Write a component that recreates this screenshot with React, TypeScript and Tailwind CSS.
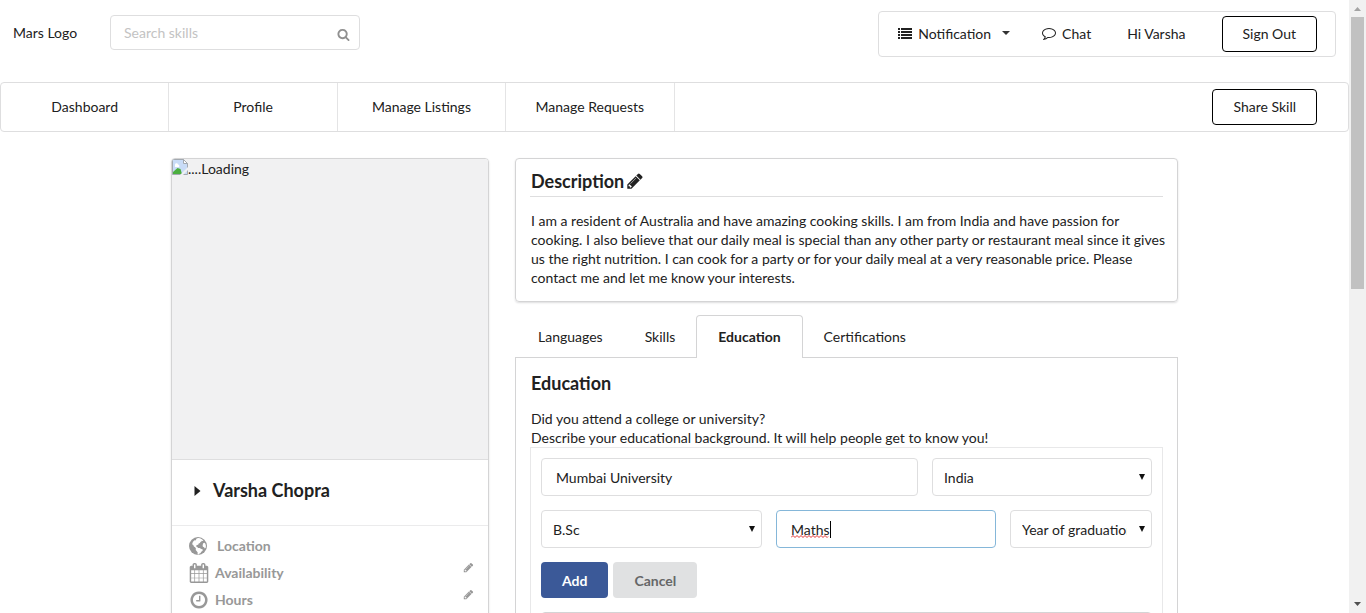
import type { ReactNode } from "react";

const paths = {
  search:
    "M1216 832q0-185-131.5-316.5t-316.5-131.5-316.5 131.5-131.5 316.5 131.5 316.5 316.5 131.5 316.5-131.5 131.5-316.5zm512 832q0 52-38 90t-90 38q-54 0-90-38l-343-342q-179 124-399 124-143 0-273.5-55.5t-225-150-150-225-55.5-273.5 55.5-273.5 150-225 225-150 273.5-55.5 273.5 55.5 225 150 150 225 55.5 273.5q0 220-124 399l343 343q37 37 37 90z",
  list: "M0 256h256v256h-256zM384 256h1408v256h-1408zM0 640h256v256h-256zM384 640h1408v256h-1408zM0 1024h256v256h-256zM384 1024h1408v256h-1408zM0 1408h256v256h-256zM384 1408h1408v256h-1408z",
  comment:
    "M896 384q-204 0-381.5 69.5t-282 187.5-104.5 255q0 112 71.5 213.5t201.5 175.5l87 50-27 96q-24 91-70 172 152-63 275-171l43-38 57 6q69 8 130 8 204 0 381.5-69.5t282-187.5 104.5-255-104.5-255-282-187.5-381.5-69.5zm896 512q0 174-120 321.5t-326 233-450 85.5q-70 0-145-8-198 175-460 242-49 14-114 22h-5q-15 0-27-10.5t-16-27.5v-1q-3-4-.5-12t2-10 4.5-9.5l6-9 7-8.5 8-9q7-8 31-34.5t34.5-38 31-39.5 32.5-51 27-59 26-76q-157-89-247.5-220t-90.5-281q0-174 120-321.5t326-233 450-85.5 450 85.5 326 233 120 321.5z",
  pencil:
    "M491 1536l91-91-235-235-91 91v107h128v128h107zm523-928q0-22-22-22-10 0-17 7l-542 542q-7 7-7 17 0 22 22 22 10 0 17-7l542-542q7-7 7-17zm-54-192l416 416-832 832h-416v-416zm683 96q0 53-37 90l-166 166-416-416 166-165q36-38 90-38 53 0 91 38l235 234q37 39 37 91z",
  clock:
    "M1024 544v448q0 14-9 23t-23 9h-320q-14 0-23-9t-9-23v-64q0-14 9-23t23-9h224v-352q0-14 9-23t23-9h64q14 0 23 9t9 23zm416 352q0-148-73-273t-198-198-273-73-273 73-198 198-73 273 73 273 198 198 273 73 273-73 198-198 73-273zm224 0q0 209-103 385.5t-279.5 279.5-385.5 103-385.5-103-279.5-279.5-103-385.5 103-385.5 279.5-279.5 385.5-103 385.5 103 279.5 279.5 103 385.5z",
  calendar:
    "M192 1664h288v-288h-288v288zm352 0h320v-288h-320v288zm-352-352h288v-320h-288v320zm352 0h320v-320h-320v320zm-352-384h288v-288h-288v288zm736 736h320v-288h-320v288zm-384-736h320v-288h-320v288zm768 736h288v-288h-288v288zm-384-352h320v-320h-320v320zm-352-864v-288q0-13-9.5-22.5t-22.5-9.5h-64q-13 0-22.5 9.5t-9.5 22.5v288q0 13 9.5 22.5t22.5 9.5h64q13 0 22.5-9.5t9.5-22.5zm736 864h288v-320h-288v320zm-384-384h320v-288h-320v288zm384 0h288v-288h-288v288zm32-480v-288q0-13-9.5-22.5t-22.5-9.5h-64q-13 0-22.5 9.5t-9.5 22.5v288q0 13 9.5 22.5t22.5 9.5h64q13 0 22.5-9.5t9.5-22.5zm384-64v1280q0 52-38 90t-90 38h-1408q-52 0-90-38t-38-90v-1280q0-52 38-90t90-38h128v-96q0-66 47-113t113-47h64q66 0 113 47t47 113v96h384v-96q0-66 47-113t113-47h64q66 0 113 47t47 113v96h128q52 0 90 38t38 90z",
};

function Icon({ name, className }: { name: keyof typeof paths; className: string }) {
  return (
    <svg viewBox="0 0 1792 1792" fill="currentColor" aria-hidden="true" className={`shrink-0 ${className}`}>
      <path d={paths[name]} />
    </svg>
  );
}

function GlobeIcon({ className }: { className: string }) {
  return (
    <svg viewBox="0 0 18 18" aria-hidden="true" className={`shrink-0 ${className}`}>
      <circle cx="9" cy="9" r="9" fill="currentColor" />
      <path
        fill="#fff"
        d="M7.600 1.600 9.200 1l1.800.3 1.900.9 1.500 1.300-.8.5-.9-.3-.3.9-1 .4-.4 1-1.300.6-.5 1.100-1.400.4-.7.9.4.8.9.2.6.9 1.600.2 1.700.9 1.500.5-.2 1.300-1.300.9-.7 1.300-1.400.8-.8 1-.9-.4.2-1.900-.9-1.300-1.100-1.200.2-1.500-.8-1.200-1.200-.8-.6-1.400-1-.7.1-1.400 1-1.700 1.100-1 .9.3.6-.9z"
      />
      <path fill="#fff" d="m14.200 6.200 1.300-.5.900 1.100.5 1.900-.2 2-.9.900-.7-1.300-1.200-.6-.3-1.500z" />
    </svg>
  );
}

function BrokenImageIcon() {
  return (
    <svg viewBox="0 0 16 16" className="size-4 shrink-0" aria-hidden="true">
      <path d="M.5.5h11l4 4v11H.5z" fill="#c9dcf7" stroke="#a3a9b0" />
      <path d="M1 15v-2l4.500-4 3 1 1.500 5z" fill="#4caf3f" />
      <path d="M3 6a1.500 1.500 0 0 1 3-.5A1.500 1.500 0 0 1 7 8H3z" fill="#fff" />
      <path d="M11.500.5v4h4z" fill="#fff" stroke="#a3a9b0" />
      <path d="M16 8v3l-5 5H8z" fill="#f1f1f2" />
    </svg>
  );
}

function Select({ label, value }: { label: string; value: string }) {
  return (
    <div className="relative min-w-0">
      <select
        aria-label={label}
        className="h-[38px] w-full appearance-none overflow-hidden rounded border border-[#dededf] bg-white pr-6 pl-[11px] text-clip"
      >
        <option>{value}</option>
      </select>
      <svg viewBox="0 0 6 6" aria-hidden="true" className="pointer-events-none absolute top-4 right-[7px] size-[6px]">
        <path d="M0 0h6L3 6z" fill="#111" />
      </svg>
    </div>
  );
}

function NavItem({ children }: { children: ReactNode }) {
  return (
    <a href="#" className="flex w-1/8 items-center justify-center border-r border-[#e4e4e5] pb-[2px]">
      {children}
    </a>
  );
}

function OutlineButton({ children }: { children: ReactNode }) {
  return (
    <button type="button" className="h-9 rounded border border-black bg-white px-5 pb-[2px]">
      {children}
    </button>
  );
}

function Detail({ icon, label, editable }: { icon: ReactNode; label: string; editable?: boolean }) {
  return (
    <li className="flex h-[27px] items-center text-[#989898]">
      {icon}
      <span className="flex-1 font-bold">{label}</span>
      {editable && (
        <button type="button" aria-label={`Edit ${label}`} className="pb-[10px]">
          <Icon name="pencil" className="size-[11px]" />
        </button>
      )}
    </li>
  );
}

function Tab({ children }: { children: ReactNode }) {
  return (
    <button type="button" role="tab" aria-selected="false" className="px-[21px]">
      {children}
    </button>
  );
}

function Scrollbar() {
  return (
    <div aria-hidden="true" className="flex w-[17px] shrink-0 flex-col bg-[#f1f1f1]">
      <svg viewBox="0 0 17 17" className="size-[17px]">
        <path d="M5 11h7L8.500 7z" fill="#a3a3a3" />
      </svg>
      <div className="mx-[2px] flex flex-1 flex-col">
        <div className="h-[47%] bg-[#c1c1c1]" />
      </div>
      <svg viewBox="0 0 17 17" className="size-[17px]">
        <path d="M5 6h7l-3.500 4z" fill="#505050" />
      </svg>
    </div>
  );
}

export default function App() {
  return (
    <div className="flex h-screen overflow-hidden bg-white font-['Lato',sans-serif] text-[14px] leading-[19px] text-[#212121]">
      <div className="min-w-0 flex-1 overflow-hidden">
        <header className="flex items-start justify-between px-[13px] pt-[11px]">
          <div className="flex items-center pt-1">
            <span className="w-[97px]">Mars Logo</span>
            <div className="relative w-[250px]">
              <input
                type="text"
                aria-label="Search skills"
                placeholder="Search skills"
                className="block h-[35px] w-full rounded border border-[#dededf] pr-8 pb-px pl-[13px] placeholder:text-[#c3c3c3]"
              />
              <Icon name="search" className="absolute top-[13px] right-[10px] size-[13px] text-[#909090]" />
            </div>
          </div>
          <nav className="flex h-[46px] items-center rounded border border-[#dededf] pr-[18px] pl-[19px]">
            <button type="button" className="flex items-center pb-[2px]">
              <Icon name="list" className="mr-[6px] size-[14px]" />
              Notification
              <svg viewBox="0 0 8 4" aria-hidden="true" className="ml-[11px] h-1 w-2">
                <path d="M0 0h8L4 4z" fill="#333" />
              </svg>
            </button>
            <a href="#" className="ml-8 flex items-center pb-[2px]">
              <Icon name="comment" className="mr-[6px] size-[14px]" />
              Chat
            </a>
            <span className="mr-9 ml-9 pb-[2px]">Hi Varsha</span>
            <OutlineButton>Sign Out</OutlineButton>
          </nav>
        </header>

        <nav className="mt-[25px] flex h-[50px] rounded border border-[#dededf]">
          <NavItem>Dashboard</NavItem>
          <NavItem>Profile</NavItem>
          <NavItem>Manage Listings</NavItem>
          <NavItem>Manage Requests</NavItem>
          <div className="ml-auto flex items-center pr-[31px]">
            <OutlineButton>Share Skill</OutlineButton>
          </div>
        </nav>

        <main className="mx-auto mt-[26px] grid max-w-[1007px] grid-cols-[318fr_663fr] items-start gap-[26px]">
          <aside className="overflow-hidden rounded border border-[#d4d4d5] shadow-[0_1px_2px_0_rgba(34,36,38,0.15)]">
            <div className="flex h-[300px] bg-[#f1f1f2]">
              <BrokenImageIcon />
              ....Loading
            </div>
            <div className="flex h-[66px] items-center border-t border-[#dededf] pb-1 pl-[22px] text-[18px] font-bold">
              <svg viewBox="0 0 6 10" aria-hidden="true" className="mr-3 h-[10px] w-[7px]">
                <path d="M0 0v10l6-5z" fill="#212121" />
              </svg>
              Varsha Chopra
            </div>
            <ul className="border-t border-[#ebebec] pt-[6px] pr-[14px] pb-6 pl-[17px]">
              <Detail icon={<GlobeIcon className="mr-[10px] size-[18px]" />} label="Location" />
              <Detail icon={<Icon name="calendar" className="mr-[6px] size-5" />} label="Availability" editable />
              <Detail icon={<Icon name="clock" className="mr-[6px] size-5" />} label="Hours" editable />
            </ul>
          </aside>

          <div className="min-w-0">
            <section className="rounded border border-[#d4d4d5] px-[14px] pb-[14px] shadow-[0_1px_2px_0_rgba(34,36,38,0.15)]">
              <h2 className="flex h-[38px] items-center border-b border-[#dededf] pt-[7px] pl-px text-[18px] font-bold">
                Description
                <Icon name="pencil" className="ml-[2px] size-[18px]" />
              </h2>
              <p className="pt-[14px] pl-px whitespace-nowrap">
                I am a resident of Australia and have amazing cooking skills. I am from India and have passion for
                <br />
                cooking. I also believe that our daily meal is special than any other party or restaurant meal since it
                gives
                <br />
                us the right nutrition. I can cook for a party or for your daily meal at a very reasonable price. Please
                <br />
                contact me and let me know your interests.
              </p>
            </section>

            <div role="tablist" className="mt-[13px] flex h-[43px] border-b border-[#d4d4d5] pl-[2px]">
              <Tab>Languages</Tab>
              <Tab>Skills</Tab>
              <button
                type="button"
                role="tab"
                aria-selected="true"
                className="-mb-px rounded-t border border-b-0 border-[#d4d4d5] bg-white px-[21px] pb-[2px] font-bold"
              >
                Education
              </button>
              <Tab>Certifications</Tab>
            </div>
            <section className="border-x border-[#d4d4d5] px-[14px] pt-4 pb-4">
              <h2 className="pl-px text-[18px] font-bold">Education</h2>
              <p className="pt-4 pl-px">
                Did you attend a college or university?
                <br />
                Describe your educational background. It will help people get to know you!
              </p>
              <form className="flex flex-col gap-[14px] border border-[#e8e8e9] p-[10px]">
                <div className="grid grid-cols-[377fr_220fr] gap-[14px]">
                  <input
                    type="text"
                    aria-label="College or university"
                    defaultValue="Mumbai University"
                    className="h-[38px] min-w-0 rounded border border-[#dededf] px-[14px]"
                  />
                  <Select label="Country of college or university" value="India" />
                </div>
                <div className="grid grid-cols-[221fr_220fr_142fr] gap-[14px]">
                  <Select label="Title" value="B.Sc" />
                  <div className="relative">
                    <input
                      type="text"
                      aria-label="Degree"
                      defaultValue="Maths"
                      className="h-[38px] w-full rounded border border-[#85b7d9] px-[14px] outline-none"
                    />
                    <svg
                      viewBox="0 0 41 18"
                      aria-hidden="true"
                      className="pointer-events-none absolute top-[11px] left-[15px] h-[18px] w-[41px]"
                    >
                      <path
                        d="M0 16.500l2-2 2 2 2-2 2 2 2-2 2 2 2-2 2 2 2-2 2 2 2-2 2 2 2-2 2 2 2-2 2 2 2-2 2 2 1-1"
                        fill="none"
                        stroke="#e03030"
                      />
                      <path d="M39.500 0v17" stroke="#000" />
                    </svg>
                  </div>
                  <Select label="Year of graduation" value="Year of graduation" />
                </div>
                <div className="flex gap-[5px]">
                  <button type="button" className="h-9 rounded bg-[#3b5998] px-[21px] font-bold text-white">
                    Add
                  </button>
                  <button type="button" className="h-9 rounded bg-[#e0e1e2] px-[21px] font-bold text-[#666768]">
                    Cancel
                  </button>
                </div>
                <div className="h-12 rounded border border-[#d4d4d5]" />
              </form>
            </section>
          </div>
        </main>
      </div>
      <Scrollbar />
    </div>
  );
}
